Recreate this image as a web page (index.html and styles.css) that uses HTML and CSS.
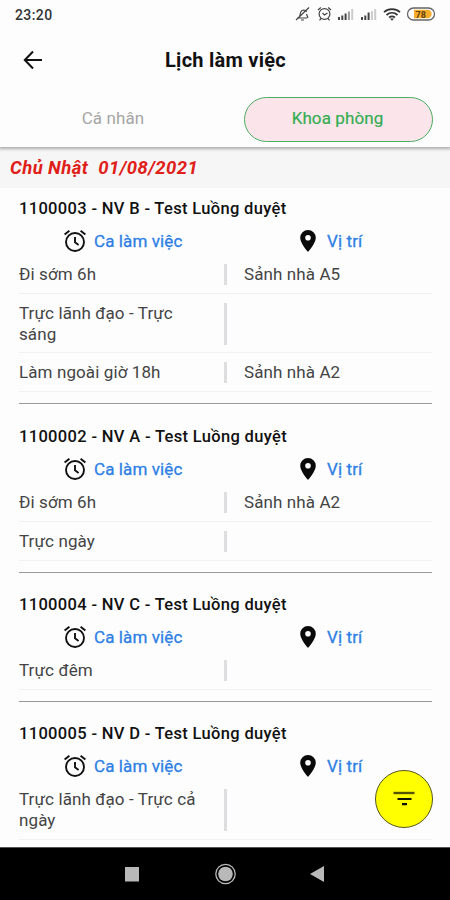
FILE: index.html
```
<!DOCTYPE html>
<html lang="vi">
<head>
<meta charset="utf-8">
<title>Lịch làm việc</title>
<link rel="stylesheet" href="styles.css">
</head>
<body>
<svg width="0" height="0" class="defs">
  <symbol id="alarm" viewBox="0 0 24 24"><g fill="none" stroke="#111" stroke-width="1.9"><circle cx="12" cy="13" r="9"/><path d="M12 8v5.3l3.6 2.6M1.6 5.6 6.4 1.7M22.4 5.6 17.6 1.7"/></g></symbol>
  <symbol id="pin" viewBox="0 0 16 22"><path fill="#0a0a0a" fill-rule="evenodd" d="M8 0a7.8 7.8 0 0 0-7.8 7.8C.2 13.400 8 22 8 22s7.800-8.600 7.800-14.200A7.800 7.800 0 0 0 8 0Zm0 5a2.800 2.800 0 1 1 0 5.600A2.800 2.800 0 0 1 8 5Z"/></symbol>
</svg>
<div class="screen">
  <header class="top">
    <div class="status">
      <span class="clock">23:20</span>
      <svg class="status-icons" width="142" height="16" viewBox="0 0 142 16">
        <g fill="none" stroke="#444" stroke-width="1.2">
          <path d="M2 12h10M4 12c1.500-2 .5-6 3-7.500 2-1 4 0 4.500 1.500M11.500 8l1.500 4M1 14 14 1.500M6 14h3"/>
          <circle cx="29.500" cy="8" r="5.400"/><path d="m27.500 7 2 2 3-2M23 4l2.800-2.500M36 4l-2.800-2.500M26 12.500l-1.500 1.800M33 12.500l1.500 1.800"/>
        </g>
        <g fill="#444"><path d="M43 11h2v3h-2zM46.300 9.500h2V14h-2zM49.600 7.500h2V14h-2zM66 11h2v3h-2zM69.300 9.500h2V14h-2zM72.600 6.500h2V14h-2z"/></g>
        <path fill="#999" d="M52.900 5.500h2V14h-2z"/>
        <path fill="#ccc" d="M56.200 3h2v11h-2zM75.900 5h2v9h-2zM79.200 3h2v11h-2z"/>
        <g fill="none" stroke="#333" stroke-width="1.700"><path d="M89 6.200c4.500-4 11.500-4 16 0M91.500 9c3.300-2.800 7.700-2.800 11 0M94.100 11.500c1.800-1.500 4-1.500 5.800 0"/></g><path fill="#333" d="m95 12.500 2 2.200 2-2.200z"/>
        <rect x="112.500" y="2" width="27" height="12" rx="6" fill="#fff" stroke="#666" stroke-width="1.300"/>
        <path fill="#f9ae2b" d="M119 3.800h13.500a4.200 4.200 0 0 1 0 8.400H119z"/>
        <text x="120.500" y="11.500" class="batt">78</text>
      </svg>
    </div>
    <div class="title-bar">
      <svg class="back" width="20" height="20" viewBox="0 0 20 20"><path d="M19 10H2M10 1.500 1.800 10l8.200 8.500" fill="none" stroke="#111" stroke-width="2"/></svg>
      <h1>Lịch làm việc</h1>
    </div>
    <nav class="tabs"><span class="tab">Cá nhân</span><span class="tab active">Khoa phòng</span></nav>
  </header>
  <div class="day">Chủ Nhật&nbsp; 01/08/2021</div>
  <main>
    <section>
      <h2>1100003 - NV B - Test Luồng duyệt</h2>
      <div class="heads"><span class="shift"><svg><use href="#alarm"/></svg>Ca làm việc</span><span class="place"><svg><use href="#pin"/></svg>Vị trí</span></div>
      <div class="row"><p>Đi sớm 6h</p><p>Sảnh nhà A5</p></div>
      <div class="row"><p>Trực lãnh đạo - Trực sáng</p><p></p></div>
      <div class="row"><p>Làm ngoài giờ 18h</p><p>Sảnh nhà A2</p></div>
    </section>
    <section>
      <h2>1100002 - NV A - Test Luồng duyệt</h2>
      <div class="heads"><span class="shift"><svg><use href="#alarm"/></svg>Ca làm việc</span><span class="place"><svg><use href="#pin"/></svg>Vị trí</span></div>
      <div class="row"><p>Đi sớm 6h</p><p>Sảnh nhà A2</p></div>
      <div class="row"><p>Trực ngày</p><p></p></div>
    </section>
    <section>
      <h2>1100004 - NV C - Test Luồng duyệt</h2>
      <div class="heads"><span class="shift"><svg><use href="#alarm"/></svg>Ca làm việc</span><span class="place"><svg><use href="#pin"/></svg>Vị trí</span></div>
      <div class="row"><p>Trực đêm</p><p></p></div>
    </section>
    <section>
      <h2>1100005 - NV D - Test Luồng duyệt</h2>
      <div class="heads"><span class="shift"><svg><use href="#alarm"/></svg>Ca làm việc</span><span class="place"><svg><use href="#pin"/></svg>Vị trí</span></div>
      <div class="row"><p>Trực lãnh đạo - Trực cả ngày</p><p></p></div>
    </section>
  </main>
  <footer class="navbar">
    <svg width="220" height="24" viewBox="0 0 220 24"><rect x="10" y="5" width="14" height="14.500" fill="#b9b9b9"/><circle cx="110.500" cy="12" r="9.700" fill="none" stroke="#b9b9b9" stroke-width="1.300"/><circle cx="110.500" cy="12" r="7.300" fill="#b9b9b9"/><path d="M195 12 209 4v16z" fill="#b9b9b9"/></svg>
  </footer>
  <button class="fab" aria-label="Lọc"><svg width="22" height="16" viewBox="0 0 22 16"><path d="M.5 2h21" stroke="#555500" stroke-width="2.400"/><path d="M4.500 8h14M9 13.200h5" stroke="#111100" stroke-width="2.200"/></svg></button>
</div>
</body>
</html>
```
FILE: styles.css
```
* { box-sizing: border-box; }
body { margin: 0; font-family: Roboto, sans-serif; color: #111; }
h1, h2, p { margin: 0; }
.defs { position: absolute; }
.screen { position: relative; width: 450px; height: 900px; overflow: hidden; background: #fdfdfe; display: flex; flex-direction: column; }
.top { flex: none; height: 147px; background: #fdfdfe; box-shadow: 0 1px 3px 1px rgba(0,0,0,.3); z-index: 1; }
.status { height: 30px; padding: 0 13px 0 15px; display: flex; align-items: center; justify-content: space-between; }
.clock { font-size: 14px; font-weight: 500; letter-spacing: .4px; color: #333; }
.status-icons { margin-top: -2px; }
.batt { font: 700 9px Roboto, sans-serif; fill: #604010; }
.title-bar { height: 60px; padding: 0 22px 0 23px; display: grid; grid-template-columns: 20px 1fr 20px; align-items: center; }
h1 { text-align: center; font-size: 20px; font-weight: 700; letter-spacing: .25px; }
.tabs { display: flex; padding: 7px 17px 0 0; }
.tab { flex: 1; height: 45px; line-height: 43px; text-align: center; font-size: 17px; letter-spacing: .1px; color: #a5a5a5; }
.tab:first-child { padding-right: 18px; }
.tab.active { flex: 0 0 189px; border: 1px solid #48ae62; border-radius: 23px; background: #fce5ea; color: #35ad52; line-height: 41px; padding-right: 2px; -webkit-text-stroke: .2px #35ad52; }
.day { flex: none; height: 41px; padding: 2px 10px 0; line-height: 38px; background: #f6f6f6; color: #e02018; font-size: 18.500px; font-weight: 700; font-style: italic; letter-spacing: .43px; }
main { flex: none; height: 659px; overflow: hidden; padding: 0 18px 0 19px; }
section { padding: 21.300px 0 11px; border-bottom: 1px solid #999; }
section:first-child { padding-top: 10px; }
h2 { height: 22px; line-height: 22px; font-size: 16.500px; font-weight: 500; letter-spacing: .33px; white-space: nowrap; }
.heads { height: 34.900px; padding-top: 7px; display: grid; grid-template-columns: 206px 1fr; align-items: center; color: #2e7fe4; font-size: 17px; letter-spacing: .1px; -webkit-text-stroke: .3px #2e7fe4; }
.heads span { display: flex; align-items: center; }
.shift { padding-left: 44px; gap: 7px; }
.shift svg { width: 24px; height: 24px; }
.place { padding-left: 75px; gap: 11px; }
.place svg { width: 16px; height: 22px; }
.row { display: grid; grid-template-columns: 205px 1fr; padding: 9px 0 8px; border-bottom: 1px solid #f1f1f3; font-size: 17px; line-height: 21px; letter-spacing: .1px; color: #444; }
.row p { min-height: 21px; }
.row p:first-child { padding-right: 24px; }
.row p:last-child { border-left: 3px solid #dedee0; padding-left: 17px; }
.row:nth-of-type(3):not(:last-child) { padding-bottom: 7.500px; }
.navbar { flex: none; height: 53px; background: #000; border-top: 1px solid #555; display: flex; justify-content: center; align-items: center; }
.fab { position: absolute; right: 17.500px; bottom: 72px; width: 58px; height: 58px; padding: 0; border: 1px solid #555520; border-radius: 50%; background: #ff0; display: flex; align-items: center; justify-content: center; }
```
